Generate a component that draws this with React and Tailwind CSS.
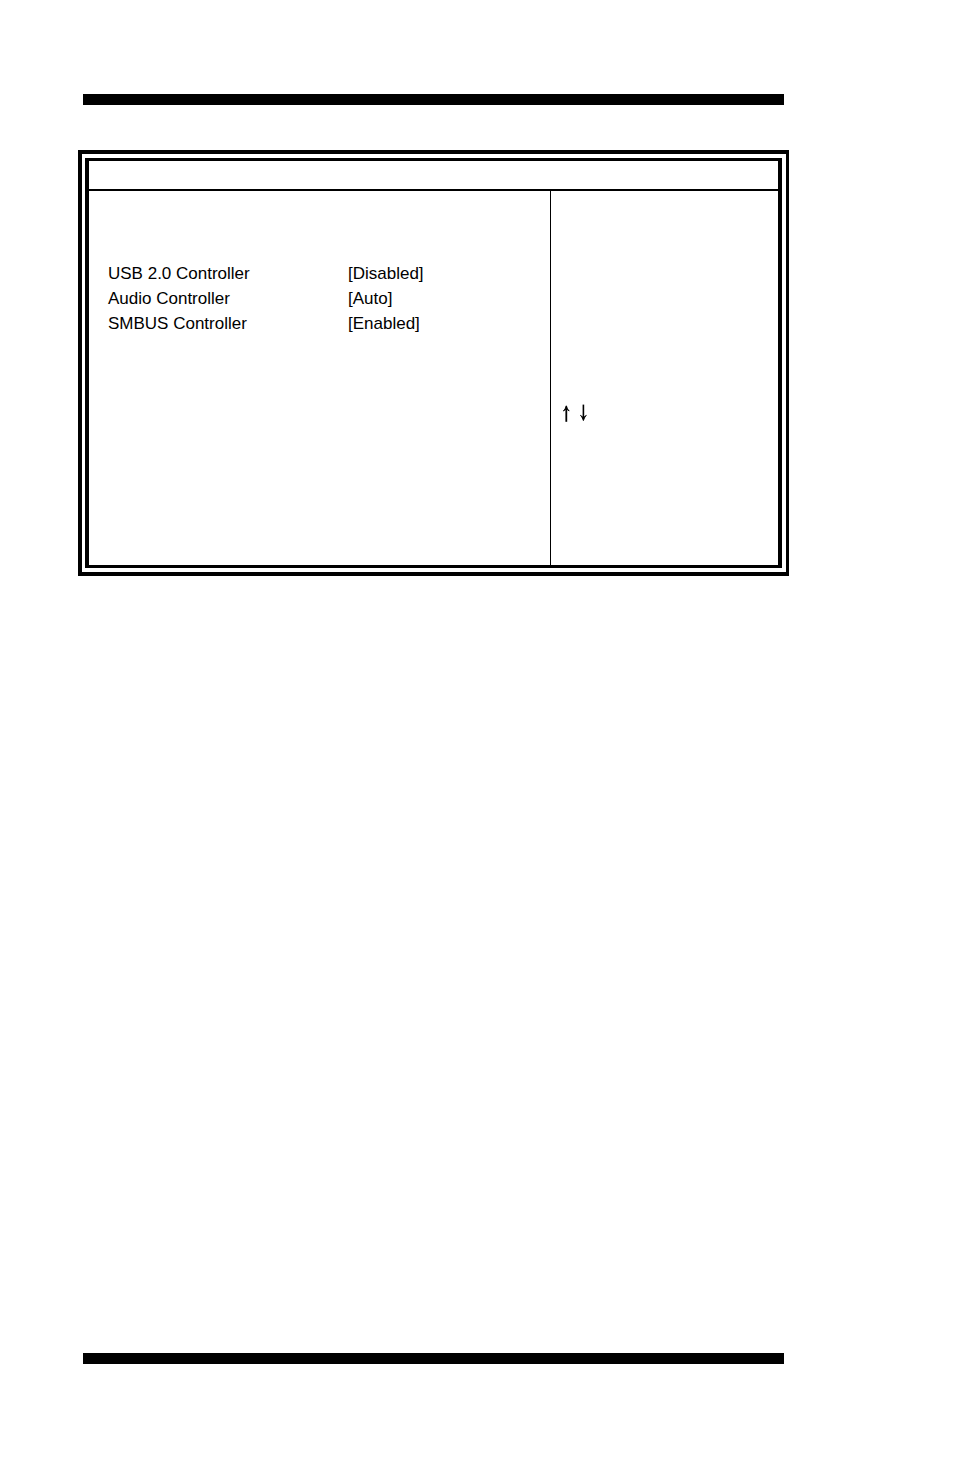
const settings = [
    { name: "USB 2.0 Controller", value: "[Disabled]" },
    { name: "Audio Controller", value: "[Auto]" },
    { name: "SMBUS Controller", value: "[Enabled]" },
];

const Rule = () => <div className="mx-[5px] h-[11px] bg-black" />;

const Arrow = ({ label, down }) => (
    <svg
        role="img"
        aria-label={label}
        className="h-[18px] w-2"
        viewBox="0 0 8 18"
        fill="none"
        stroke="black"
    >
        {down ? (
            <>
                <path d="M4.4 0.6V15.5" strokeWidth="1.6" />
                <path d="M1.5 11.4C3 13 3.9 14.6 4.4 16.6C4.9 14.6 5.8 13 7.3 11.4L4.4 13.6Z" fill="black" strokeWidth="0.9" />
            </>
        ) : (
            <>
                <path d="M4.3 17.8V2.5" strokeWidth="1.8" />
                <path d="M1.4 7C2.9 5.4 3.8 3.8 4.3 1.8C4.8 3.8 5.7 5.4 7.2 7L4.3 4.8Z" fill="black" strokeWidth="0.9" />
            </>
        )}
    </svg>
);

const SetupPanel = () => {
    return (
        <section className="mt-[45px] border-4 border-r-3 border-black pt-1 pr-1 pb-1 pl-[3px]">
            <div className="border-x-4 border-y-3 border-black">

                <header className="h-[30px] border-b-2 border-black" />

                <div className="flex min-h-[374px]">
                    <div className="flex-1 pt-[70px] pl-[19px]">
                        <table className="text-left text-[17px] leading-[25px]">
                            <tbody>
                                {settings.map((item) => (
                                    <tr key={item.name}>
                                        <th scope="row" className="w-60 p-0 font-normal">{item.name}</th>
                                        <td className="p-0">{item.value}</td>
                                    </tr>
                                ))}
                            </tbody>
                        </table>
                    </div>

                    <aside className="w-[228px] border-l border-black pt-[213px] pl-[11px]">
                        <div className="flex gap-[9px]">
                            <Arrow label="Up" />
                            <Arrow label="Down" down />
                        </div>
                    </aside>
                </div>
            </div>
        </section>
    );
};

const App = () => {
    return (
        <main className="flex min-h-screen flex-col bg-white pt-[94px] pr-[165px] pb-[111px] pl-[78px] font-['Liberation_Sans',Arial,sans-serif] text-black">
            <Rule />
            <SetupPanel />
            <div className="mt-auto">
                <Rule />
            </div>
        </main>
    );
};

export default App;
